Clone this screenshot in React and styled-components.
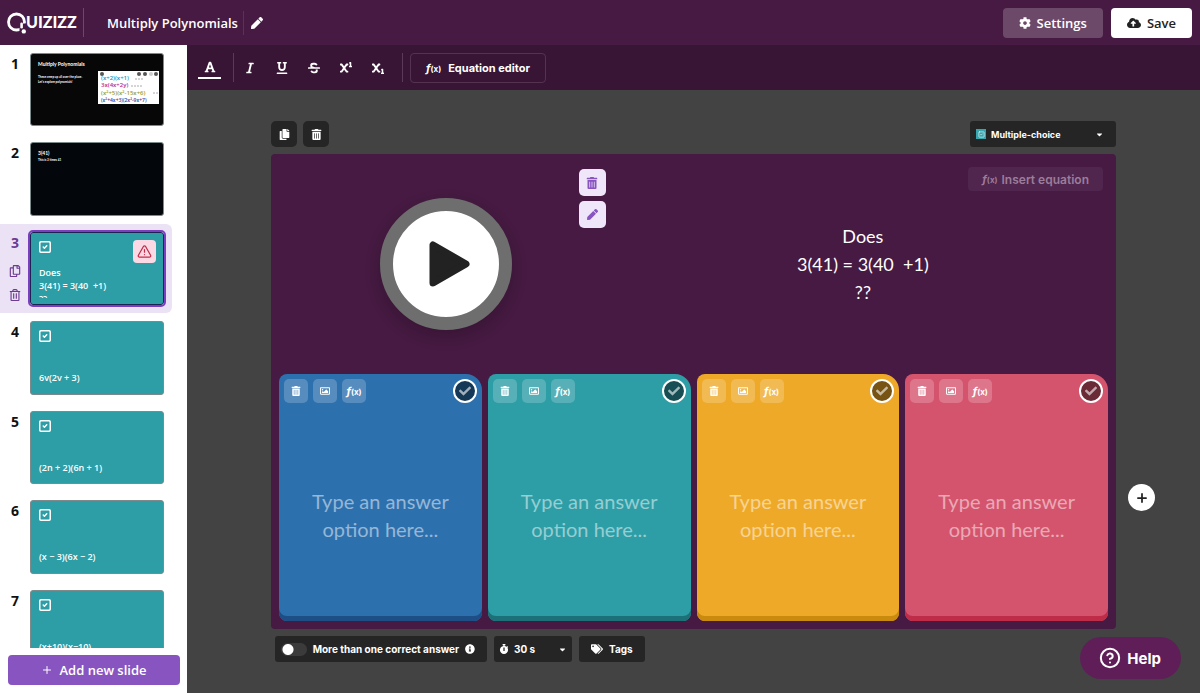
import React from 'react';
import styled, { createGlobalStyle } from 'styled-components';
import {
  FaCaretDown,
  FaCheck,
  FaCloudUploadAlt,
  FaCog,
  FaCopy,
  FaFont,
  FaInfoCircle,
  FaItalic,
  FaPen,
  FaRegCopy,
  FaRegImage,
  FaRegTrashAlt,
  FaStopwatch,
  FaStrikethrough,
  FaSubscript,
  FaSuperscript,
  FaTags,
  FaTrashAlt,
  FaUnderline,
} from 'react-icons/fa';
import { CircleHelp, Plus, SquareCheck, TriangleAlert } from 'lucide-react';

const slides = [
  { id: 1, kind: 'intro' },
  { id: 2, kind: 'text' },
  { id: 3, kind: 'quiz', text: 'Does\n3(41) = 3(40  +1)\n??', active: true },
  { id: 4, kind: 'quiz', text: '6v(2v + 3)' },
  { id: 5, kind: 'quiz', text: '(2n + 2)(6n + 1)' },
  { id: 6, kind: 'quiz', text: '(x − 3)(6x − 2)' },
  { id: 7, kind: 'quiz', text: '(x+10)(x−10)' },
];

const answers = [
  { id: 'blue', color: '#2d70ae', edge: '#1d4f86' },
  { id: 'teal', color: '#2d9da6', edge: '#1c7078' },
  { id: 'yellow', color: '#efa929', edge: '#c98a0e' },
  { id: 'pink', color: '#d5546d', edge: '#bf2c47' },
];

const formats = [
  { label: 'Italic', Icon: FaItalic },
  { label: 'Underline', Icon: FaUnderline },
  { label: 'Strikethrough', Icon: FaStrikethrough },
  { label: 'Superscript', Icon: FaSuperscript },
  { label: 'Subscript', Icon: FaSubscript },
];

const Logo = () => (
  <svg width="74" height="24" viewBox="0 0 74 24" role="img" aria-label="Quizizz">
    <circle cx="8.5" cy="11" r="8" fill="none" stroke="#fff" strokeWidth="2.8" />
    <path d="M11.5 14v7.5h10v-9h-6z" fill="#461a42" />
    <path d="M13.6 12.8v3.4" stroke="#fff" strokeWidth="2.6" strokeLinecap="round" />
    <circle cx="15.8" cy="20.4" r="2.2" fill="#fff" />
    <text x="18" y="17" fill="#fff" fontFamily="Lato, sans-serif" fontWeight="900" fontSize="16">
      UIZIZZ
    </text>
  </svg>
);

const FormulaPicture = () => (
  <svg width="61" height="33" viewBox="0 0 61 33" role="img" aria-label="Polynomials">
    <rect width="61" height="33" fill="#fff" />
    <g fill="#555">
      <circle cx="4" cy="3" r="2" />
      <circle cx="41" cy="3" r="2" />
      <circle cx="47" cy="3" r="2" />
      <circle cx="58" cy="3" r="2" />
    </g>
    <circle cx="53" cy="3" r="2" fill="#ccc" />
    <g fontFamily="Open Sans, sans-serif" fontSize="6" fontWeight="600">
      <text x="3" y="9" fill="#2593bd">(x+2)(x+1)</text>
      <text x="3" y="16" fill="#b8278f">3x(4x+2y)</text>
      <text x="3" y="24" fill="#9a9a2c">(x²+5)(x²-15x+6)</text>
      <text x="3" y="31" fill="#453a8c" fontSize="5">(x²+4x+3)(2x²-9x+7)</text>
    </g>
    <path d="M37 8h9M33 15h12M55 22h5" stroke="#aaa" strokeWidth="1" strokeDasharray="2 1" />
  </svg>
);

const Formula = () => (
  <Fx>
    f<small>(x)</small>
  </Fx>
);

const SlideBody = ({ slide }) => {
  if (slide.kind === 'intro') {
    return (
      <IntroThumb>
        <h3>Multiply Polynomials</h3>
        <div>
          <p>
            These creep up all over the place.
            <br />
            Let's explore polynomials!
          </p>
          <FormulaPicture />
        </div>
      </IntroThumb>
    );
  }
  if (slide.kind === 'text') {
    return (
      <TextThumb>
        <h3>3(41)</h3>
        <p>This is 3 times 41</p>
      </TextThumb>
    );
  }
  return (
    <QuizThumb $active={slide.active}>
      <div className="top">
        <SquareCheck size={14} strokeWidth={2.6} />
        {slide.active && (
          <Warning>
            <TriangleAlert size={15} />
          </Warning>
        )}
      </div>
      <p>{slide.text}</p>
    </QuizThumb>
  );
};

const App = () => (
  <Page>
    <GlobalStyle />
    <Header>
      <LogoBox href="#">
        <Logo />
      </LogoBox>
      <h1>Multiply Polynomials</h1>
      <RenameButton aria-label="Rename quiz">
        <FaPen size={12} />
      </RenameButton>
      <HeaderActions>
        <HeaderButton>
          <FaCog size={12} />
          Settings
        </HeaderButton>
        <HeaderButton $light>
          <FaCloudUploadAlt size={14} />
          Save
        </HeaderButton>
      </HeaderActions>
    </Header>
    <Body>
      <Sidebar>
        <SlideList>
          {slides.map((slide) => (
            <SlideRow key={slide.id} $active={slide.active}>
              <SlideSide $active={slide.active}>
                <span>{slide.id}</span>
                {slide.active && (
                  <>
                    <button aria-label="Duplicate slide">
                      <FaRegCopy size={12} />
                    </button>
                    <button aria-label="Delete slide">
                      <FaRegTrashAlt size={12} />
                    </button>
                  </>
                )}
              </SlideSide>
              <SlideBody slide={slide} />
            </SlideRow>
          ))}
        </SlideList>
        <SidebarFooter>
          <AddSlideButton>
            <Plus size={12} />
            Add new slide
          </AddSlideButton>
        </SidebarFooter>
      </Sidebar>
      <Main>
        <Toolbar>
          <ColorButton aria-label="Text color">
            <FaFont size={12} />
          </ColorButton>
          <Divider />
          <FormatGroup>
            {formats.map(({ label, Icon }) => (
              <FormatButton key={label} aria-label={label}>
                <Icon size={12} />
              </FormatButton>
            ))}
          </FormatGroup>
          <Divider />
          <EquationButton>
            <Formula />
            Equation editor
          </EquationButton>
        </Toolbar>
        <Editor>
          <TopBar>
            <DarkButton aria-label="Duplicate">
              <FaCopy size={11} />
            </DarkButton>
            <DarkButton aria-label="Delete">
              <FaTrashAlt size={11} />
            </DarkButton>
            <TypePicker>
              <span className="type">
                <SquareCheck size={7} />
              </span>
              <select aria-label="Question type">
                <option>Multiple-choice</option>
              </select>
              <FaCaretDown size={9} />
            </TypePicker>
          </TopBar>
          <Stage>
            <Question>
              <Media>
                <PlayButton aria-label="Play video">
                  <svg width="42" height="48" viewBox="0 0 42 48">
                    <path
                      d="M5 5v38l33-19z"
                      fill="#222"
                      stroke="#222"
                      strokeWidth="7"
                      strokeLinejoin="round"
                    />
                  </svg>
                </PlayButton>
                <MediaActions>
                  <button aria-label="Delete media">
                    <FaTrashAlt size={12} />
                  </button>
                  <button aria-label="Edit media">
                    <FaPen size={11} />
                  </button>
                </MediaActions>
              </Media>
              <QuestionText>
                <InsertButton>
                  <Formula />
                  Insert equation
                </InsertButton>
                <p>{'Does\n3(41) = 3(40  +1)\n??'}</p>
              </QuestionText>
            </Question>
            <Answers>
              {answers.map(({ id, color, edge }) => (
                <AnswerCard key={id} $color={color} $edge={edge}>
                  <AnswerTools>
                    <button aria-label="Delete option">
                      <FaTrashAlt size={10} />
                    </button>
                    <button aria-label="Add image">
                      <FaRegImage size={10} />
                    </button>
                    <button aria-label="Add equation">
                      <Formula />
                    </button>
                    <CorrectButton aria-label="Mark as correct">
                      <FaCheck size={12} />
                    </CorrectButton>
                  </AnswerTools>
                  <AnswerBody>
                    <textarea
                      rows={2}
                      aria-label="Answer option"
                      placeholder="Type an answer option here..."
                    />
                  </AnswerBody>
                </AnswerCard>
              ))}
            </Answers>
          </Stage>
          <SideRail>
            <AddOption aria-label="Add answer option">
              <Plus size={14} strokeWidth={3} />
            </AddOption>
          </SideRail>
          <BottomBar>
            <MultiToggle>
              <input type="checkbox" />
              More than one correct answer
              <FaInfoCircle size={10} />
            </MultiToggle>
            <TimePicker>
              <FaStopwatch size={10} />
              <select aria-label="Time limit">
                <option>30 s</option>
              </select>
              <FaCaretDown size={9} />
            </TimePicker>
            <TagsButton>
              <FaTags size={12} />
              Tags
            </TagsButton>
          </BottomBar>
        </Editor>
      </Main>
    </Body>
    <HelpButton>
      <CircleHelp size={22} strokeWidth={2.2} />
      Help
    </HelpButton>
  </Page>
);

export default App;

const GlobalStyle = createGlobalStyle`
  * {
    box-sizing: border-box;
    margin: 0;
    padding: 0;
  }
  body {
    font-family: 'Open Sans', sans-serif;
    color: #fff;
    background: #434343;
  }
  button, select, textarea {
    border: 0;
    background: none;
    color: inherit;
    font: inherit;
    cursor: pointer;
  }
  select {
    appearance: none;
    outline: none;
  }
`;

const Page = styled.div`
  display: flex;
  flex-direction: column;
  height: 100vh;
  min-height: 560px;
`;

const Header = styled.header`
  display: flex;
  align-items: center;
  height: 45px;
  padding: 0 8px;
  background: #461a42;
  h1 {
    padding: 0 5px 0 23px;
    font-size: 13px;
    font-weight: 600;
  }
`;

const LogoBox = styled.a`
  display: flex;
  align-items: center;
  width: 76px;
  height: 29px;
  border-right: 1px solid #6b4868;
  svg {
    overflow: visible;
  }
`;

const RenameButton = styled.button`
  display: flex;
  padding: 6px 7px;
  border-left: 1px solid #5a3257;
`;

const HeaderActions = styled.div`
  display: flex;
  gap: 8px;
  margin-left: auto;
`;

const HeaderButton = styled.button`
  display: flex;
  align-items: center;
  gap: 6px;
  height: 30px;
  padding: 0 16px;
  border-radius: 4px;
  font-size: 13px;
  font-weight: 600;
  color: ${({ $light }) => ($light ? '#222' : '#fff')};
  background: ${({ $light }) => ($light ? '#fff' : '#6d4969')};
`;

const Body = styled.div`
  display: grid;
  grid-template-columns: 187px minmax(0, 1fr);
  flex: 1;
  min-height: 0;
`;

const Sidebar = styled.aside`
  display: flex;
  flex-direction: column;
  min-height: 0;
  color: #111;
  background: #fff;
`;

const SlideList = styled.ol`
  flex: 1;
  min-height: 0;
  padding-right: 15px;
  overflow: hidden;
  list-style: none;
`;

const SlideRow = styled.li`
  display: grid;
  grid-template-columns: 30px minmax(0, 1fr);
  padding: 8px 8px 8px 0;
  border-radius: 0 6px 6px 0;
  background: ${({ $active }) => ($active ? '#ebe3f5' : 'transparent')};
`;

const SlideSide = styled.div`
  display: flex;
  flex-direction: column;
  align-items: center;
  gap: 12px;
  padding-top: 1px;
  color: ${({ $active }) => ($active ? '#6b3a91' : '#111')};
  span {
    font-size: 14px;
    line-height: 20px;
    font-weight: 700;
  }
  button {
    display: flex;
  }
`;

const Thumb = styled.div`
  aspect-ratio: 31 / 17;
  border: 1px solid #7d8a8c;
  border-radius: 3px;
  overflow: hidden;
  color: #fff;
`;

const IntroThumb = styled(Thumb)`
  padding: 7px 4px 7px 7px;
  background: #070707;
  font-family: Lato, sans-serif;
  h3 {
    font-size: 5px;
    line-height: 6px;
    font-weight: 700;
  }
  div {
    display: flex;
    justify-content: space-between;
    padding-top: 4px;
  }
  p {
    padding-top: 4px;
    font-size: 3px;
    line-height: 5px;
    font-weight: 700;
    white-space: nowrap;
  }
`;

const TextThumb = styled(Thumb)`
  padding: 7px;
  background: #03070c;
  font-family: Lato, sans-serif;
  h3 {
    font-size: 5px;
    line-height: 6px;
  }
  p {
    padding-top: 2px;
    font-size: 3px;
    line-height: 5px;
    font-weight: 700;
  }
`;

const QuizThumb = styled(Thumb)`
  display: flex;
  flex-direction: column;
  padding: 7px 7px 0 8px;
  background: #2d9da6;
  border-color: ${({ $active }) => ($active ? '#1c2350' : '#7d8a8c')};
  outline: ${({ $active }) => ($active ? '2px solid #7a3fc0' : 'none')};
  .top {
    display: flex;
    justify-content: space-between;
    height: 24px;
  }
  .top > svg {
    margin-left: -1px;
  }
  p {
    height: 32px;
    margin-top: ${({ $active }) => ($active ? '2px' : '25px')};
    overflow: hidden;
    font-size: 9px;
    line-height: 13px;
    font-weight: 600;
    white-space: pre;
  }
`;

const Warning = styled.span`
  display: grid;
  place-items: center;
  width: 23px;
  height: 23px;
  border-radius: 4px;
  color: #c02d4b;
  background: #fbd9e4;
`;

const SidebarFooter = styled.div`
  padding: 7px 7px 8px 8px;
`;

const AddSlideButton = styled.button`
  display: flex;
  align-items: center;
  justify-content: center;
  gap: 6px;
  width: 100%;
  height: 30px;
  border-radius: 4px;
  color: #fff;
  background: #8854c0;
  font-size: 13px;
  font-weight: 600;
`;

const Main = styled.main`
  display: flex;
  flex-direction: column;
  min-width: 0;
`;

const Toolbar = styled.div`
  display: flex;
  align-items: center;
  gap: 8px;
  height: 45px;
  padding: 0 11px;
  background: #381535;
`;

const ColorButton = styled.button`
  display: flex;
  justify-content: center;
  width: 23px;
  padding: 4px 0;
  border-bottom: 2px solid #fff;
`;

const Divider = styled.span`
  width: 1px;
  height: 29px;
  margin: 0 4px;
  background: #5a3a57;
`;

const FormatGroup = styled.div`
  display: flex;
  gap: 8px;
  margin-left: -8px;
`;

const FormatButton = styled.button`
  display: grid;
  place-items: center;
  width: 24px;
  height: 24px;
`;

const Fx = styled.span`
  font-size: 11px;
  font-weight: 700;
  font-style: italic;
  small {
    font-size: 8px;
    font-style: normal;
  }
`;

const EquationButton = styled.button`
  display: flex;
  align-items: center;
  gap: 7px;
  height: 30px;
  margin-left: -5px;
  padding: 0 15px;
  border: 1px solid #553350;
  border-radius: 4px;
  font-family: Inter, sans-serif;
  font-size: 11px;
  font-weight: 700;
`;

const Editor = styled.section`
  display: grid;
  grid-template-columns: minmax(0, 1fr) 84px;
  grid-template-rows: 26px minmax(0, 1fr) 26px;
  row-gap: 7px;
  flex: 1;
  min-height: 0;
  padding: 31px 0 31px 84px;
  background: #434343;
  font-family: Inter, sans-serif;
  font-size: 10px;
  font-weight: 700;
`;

const TopBar = styled.div`
  display: flex;
  gap: 6px;
  grid-column: 1;
`;

const DarkButton = styled.button`
  display: grid;
  place-items: center;
  width: 26px;
  border-radius: 5px;
  background: #252525;
`;

const TypePicker = styled.div`
  display: flex;
  align-items: center;
  gap: 5px;
  width: 146px;
  margin-left: auto;
  padding: 0 12px 0 6px;
  border-radius: 3px;
  background: #252525;
  select {
    flex: 1;
    font-size: 9px;
  }
  .type {
    display: grid;
    place-items: center;
    width: 10px;
    height: 10px;
    background: #35a5ae;
  }
`;

const Stage = styled.div`
  display: grid;
  grid-template-rows: 220px minmax(0, 1fr);
  grid-column: 1;
  padding-bottom: 8px;
  border-radius: 4px;
  background: #461a42;
`;

const Question = styled.div`
  display: grid;
  grid-template-columns: minmax(0, 2fr) minmax(0, 3fr);
  gap: 8px;
  padding: 0 8px 0 12px;
`;

const Media = styled.div`
  position: relative;
  display: grid;
  place-items: center;
`;

const PlayButton = styled.button`
  display: grid;
  place-items: center;
  width: 132px;
  height: 132px;
  padding-left: 6px;
  border: 13px solid #6e6e6e;
  border-radius: 50%;
  background: #fff;
  box-shadow: 0 6px 16px rgba(0, 0, 0, 0.2);
`;

const MediaActions = styled.div`
  position: absolute;
  top: 15px;
  right: 4px;
  display: grid;
  gap: 5px;
  button {
    display: grid;
    place-items: center;
    width: 27px;
    height: 27px;
    border-radius: 5px;
    color: #8854c0;
    background: #efe6fa;
  }
`;

const QuestionText = styled.div`
  position: relative;
  display: grid;
  place-items: center;
  p {
    font-family: Lato, sans-serif;
    font-size: 18px;
    line-height: 28px;
    font-weight: 400;
    text-align: center;
    white-space: pre;
  }
`;

const InsertButton = styled.button`
  position: absolute;
  top: 13px;
  right: 5px;
  display: flex;
  align-items: center;
  gap: 4px;
  height: 24px;
  padding: 0 14px;
  border-radius: 4px;
  color: #9b7d9b;
  background: #50254e;
  font-size: 12px;
  font-weight: 600;
`;

const Answers = styled.div`
  display: grid;
  grid-template-columns: repeat(4, minmax(0, 1fr));
  gap: 6px;
  padding: 0 8px;
`;

const AnswerCard = styled.div`
  display: flex;
  flex-direction: column;
  padding: 5px;
  border-radius: 8px 16px 8px 8px;
  background: ${({ $color }) => $color};
  box-shadow: inset 0 -5px 0 ${({ $edge }) => $edge};
`;

const AnswerTools = styled.div`
  display: flex;
  gap: 5px;
  height: 24px;
  button {
    display: grid;
    place-items: center;
    width: 24px;
    border-radius: 5px;
    background: rgba(255, 255, 255, 0.2);
  }
`;

const CorrectButton = styled.button`
  && {
    margin-left: auto;
    border: 2px solid #fff;
    border-radius: 50%;
    color: rgba(255, 255, 255, 0.6);
    background: rgba(0, 0, 0, 0.5);
  }
`;

const AnswerBody = styled.div`
  display: flex;
  align-items: center;
  flex: 1;
  padding: 10px 20px 0;
  textarea {
    width: 100%;
    resize: none;
    overflow: hidden;
    font-family: Lato, sans-serif;
    font-size: 20px;
    line-height: 28px;
    font-weight: 400;
    text-align: center;
    cursor: text;
  }
  textarea::placeholder {
    color: rgba(255, 255, 255, 0.5);
  }
`;

const SideRail = styled.div`
  display: grid;
  place-items: center start;
  padding: 220px 0 8px 12px;
`;

const AddOption = styled.button`
  display: grid;
  place-items: center;
  width: 27px;
  height: 27px;
  border-radius: 50%;
  color: #222;
  background: #fff;
`;

const BottomBar = styled.div`
  display: flex;
  gap: 7px;
  grid-column: 1;
  padding-left: 4px;
`;

const MultiToggle = styled.label`
  display: flex;
  align-items: center;
  gap: 6px;
  width: 212px;
  padding: 0 6px;
  border-radius: 3px;
  background: #252525;
  white-space: nowrap;
  input {
    appearance: none;
    width: 26px;
    height: 13px;
    border-radius: 7px;
    background: radial-gradient(circle at 7px 50%, #fff 5px, #3b3b3b 6px);
  }
  svg {
    margin-left: auto;
    margin-right: 6px;
  }
`;

const TimePicker = styled.div`
  display: flex;
  align-items: center;
  gap: 5px;
  width: 78px;
  padding: 0 5px;
  border-radius: 3px;
  background: #252525;
  select {
    flex: 1;
    min-width: 0;
  }
`;

const TagsButton = styled.button`
  display: flex;
  align-items: center;
  gap: 6px;
  padding: 0 12px;
  border-radius: 3px;
  background: #252525;
`;

const HelpButton = styled.button`
  position: fixed;
  right: 19px;
  bottom: 14px;
  display: flex;
  align-items: center;
  gap: 6px;
  height: 42px;
  padding: 0 20px 0 19px;
  border-radius: 21px;
  background: #5f1e57;
  font-family: Inter, sans-serif;
  font-size: 15px;
  font-weight: 700;
`;
